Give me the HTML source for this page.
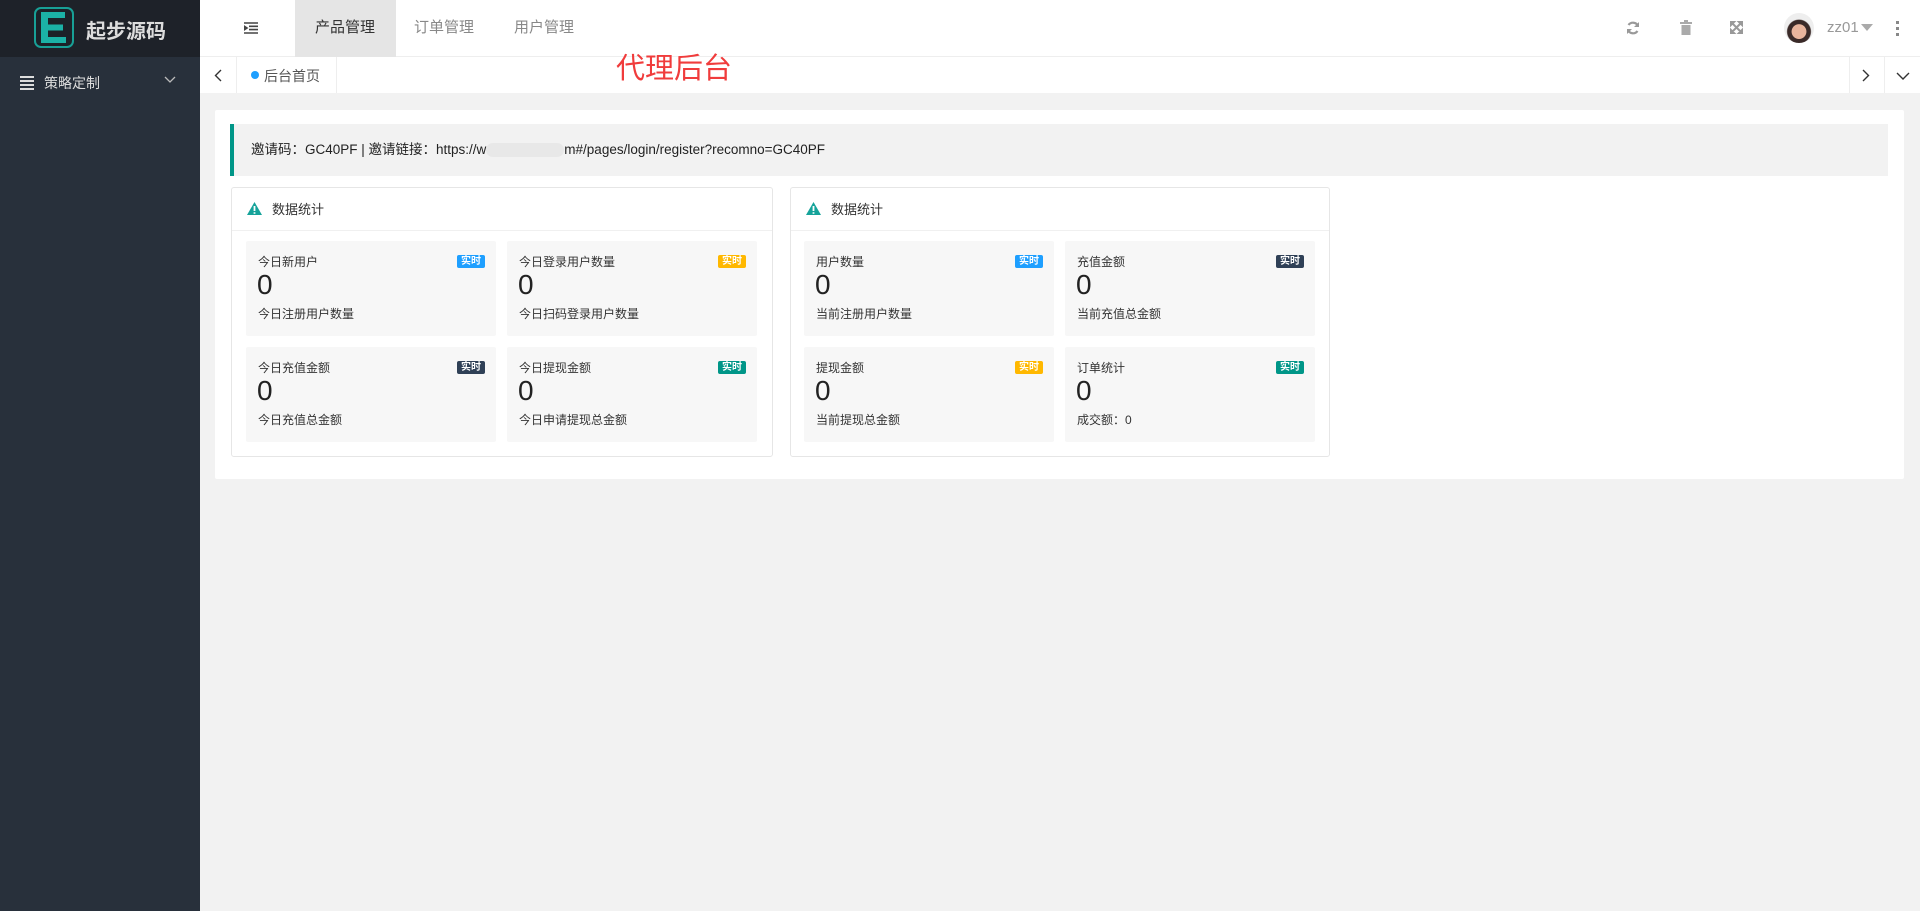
<!DOCTYPE html>
<html><head><meta charset="utf-8"><style>
*{box-sizing:border-box;margin:0;padding:0}
body{width:1920px;height:911px;overflow:hidden;background:#f2f2f2;font-family:"Liberation Sans","Noto Sans CJK SC",sans-serif;position:relative;color:#333}
.abs{position:absolute}
#side{left:0;top:0;width:200px;height:911px;background:#28303b}
#logo{left:0;top:0;width:200px;height:57px;background:#1e2229}
#hdr{left:200px;top:0;width:1720px;height:57px;background:#fff;border-bottom:1px solid #eee}
#tabs{left:200px;top:57px;width:1720px;height:36px;background:#fff}
.t{font-size:15px;color:#888;top:18px;line-height:20px}
.cell{position:absolute;background:#f7f7f7;border-radius:2px;width:250px;height:95px}
.cell .a{position:absolute;left:12px;top:12px;font-size:12px;color:#333}
.cell .b{position:absolute;left:11px;top:28px;font-size:28px;color:#222}
.cell .c{position:absolute;left:12px;top:64px;font-size:12px;color:#333}
.cell .bd{position:absolute;right:11px;top:14px;width:28px;height:13px;border-radius:2px;color:#fff;font-size:10px;font-weight:bold;text-align:center;line-height:13px}
.panel{position:absolute;top:187px;width:542px;height:270px;background:#fff;border:1px solid #e6e6e6;border-radius:3px}
.ph{height:43px;border-bottom:1px solid #f0f0f0;font-size:13px;line-height:43px;padding-left:40px;position:relative;color:#333}
.ph svg{position:absolute;left:15px;top:14px}
</style></head><body>
<div id="side" class="abs">
 <div class="abs" style="left:20px;top:76px;width:14px;height:12px">
  <div style="height:2px;background:#ddd;margin-bottom:2px"></div><div style="height:2px;background:#ddd;margin-bottom:2px"></div><div style="height:2px;background:#ddd;margin-bottom:2px"></div><div style="height:2px;background:#ddd"></div>
 </div>
 <div class="abs" style="left:44px;top:73px;font-size:14px;color:#ddd">策略定制</div>
 <svg class="abs" style="left:164px;top:76px" width="12" height="8"><path d="M1 1l5 5 5-5" stroke="#bbb" fill="none" stroke-width="1.3"/></svg>
</div>
<div id="logo" class="abs">
 <div class="abs" style="left:34px;top:7px;width:40px;height:41px;border:2px solid #18a096;border-radius:7px;background:#1c2228"></div>
 <svg class="abs" style="left:41px;top:12px" width="26" height="31"><path d="M0 0h24v6H7v6.5h15v6H7V25h18v6H0z" fill="#1bb2a6"/></svg>
 <div class="abs" style="left:86px;top:15px;font-size:20px;font-weight:bold;color:#ddd">起步源码</div>
</div>
<div id="hdr" class="abs">
 <svg class="abs" style="left:44px;top:22px" width="14" height="12"><path d="M0 1h14M5 4.3h9M5 7.6h9M0 11h14M0 4l3 2-3 2z" stroke="#444" stroke-width="1.6" fill="#444"/></svg>
 <div class="abs" style="left:95px;top:0;width:101px;height:57px;background:#e5e5e5"></div>
 <div class="abs t" style="left:115px;color:#333">产品管理</div>
 <div class="abs t" style="left:214px">订单管理</div>
 <div class="abs t" style="left:314px">用户管理</div>
 <svg class="abs" style="left:1426px;top:21px" width="14" height="14"><path d="M12 5A5.5 5.5 0 0 0 2.5 4M2 9a5.5 5.5 0 0 0 9.5 1" stroke="#999" stroke-width="2.2" fill="none"/><path d="M13 1v5h-5zM1 13V8h5z" fill="#999"/></svg>
 <svg class="abs" style="left:1480px;top:20px" width="12" height="15"><rect x="0" y="2" width="12" height="2" fill="#aaa"/><rect x="4" y="0" width="4" height="2" fill="#aaa"/><rect x="1.5" y="5" width="9" height="10" fill="#aaa"/></svg>
 <svg class="abs" style="left:1530px;top:21px" width="13" height="13"><path d="M0 0h5L0 5zM13 0v5L8 0zM0 13V8l5 5zM13 13H8l5-5zM2 2l9 9M11 2l-9 9" stroke="#999" stroke-width="2" fill="#999"/></svg>
 <div class="abs" style="left:1584px;top:13px;width:30px;height:30px;border-radius:50%;background:radial-gradient(circle at 50% 62%,#e8b49c 0 30%,#3a2a28 32% 48%,#eee 52%)"></div>
 <div class="abs" style="left:1627px;top:19px;font-size:15px;color:#999">zz01</div>
 <svg class="abs" style="left:1661px;top:24px" width="12" height="7"><path d="M0 0h12L6 7z" fill="#aaa"/></svg>
 <div class="abs" style="left:1696px;top:21px;width:3px;height:15px;background:repeating-linear-gradient(#888 0 3px,transparent 3px 6px)"></div>
</div>
<div id="tabs" class="abs">
 <svg class="abs" style="left:14px;top:12px" width="8" height="13"><path d="M7 1L1.5 6.5 7 12" stroke="#333" fill="none" stroke-width="1.4"/></svg>
 <div class="abs" style="left:36px;top:0;width:1px;height:36px;background:#eee"></div>
 <div class="abs" style="left:51px;top:14px;width:8px;height:8px;border-radius:50%;background:#1e9fff"></div>
 <div class="abs" style="left:64px;top:9px;font-size:14px;color:#555">后台首页</div>
 <div class="abs" style="left:136px;top:0;width:1px;height:36px;background:#eee"></div>
 <div class="abs" style="left:416px;top:-12px;font-size:29px;color:#f03c3c">代理后台</div>
 <div class="abs" style="left:1649px;top:0;width:1px;height:36px;background:#eee"></div>
 <div class="abs" style="left:1684px;top:0;width:1px;height:36px;background:#eee"></div>
 <svg class="abs" style="left:1662px;top:12px" width="8" height="13"><path d="M1 1l5.5 5.5L1 12" stroke="#333" fill="none" stroke-width="1.4"/></svg>
 <svg class="abs" style="left:1696px;top:15px" width="14" height="8"><path d="M1 1l6 6 6-6" stroke="#333" fill="none" stroke-width="1.4"/></svg>
</div>
<div class="abs" style="left:215px;top:110px;width:1689px;height:369px;background:#fff;border-radius:2px"></div>
<div class="abs" style="left:230px;top:124px;width:1658px;height:52px;background:#f2f2f2;border-left:4px solid #009688;font-size:13.5px;line-height:52px;padding-left:17px;color:#222">邀请码：GC40PF | 邀请链接：https://w<span style="display:inline-block;width:78px;height:14px;background:#e8e8e8;vertical-align:middle;border-radius:7px"></span>m#/pages/login/register?recomno=GC40PF</div>

<div class="panel" style="left:231px">
 <div class="ph"><svg width="15" height="13"><path d="M7.5 0L15 13H0z" fill="#16a39a"/><path d="M7.5 4v5M7.5 10.3v1.5" stroke="#fff" stroke-width="1.8"/></svg>数据统计</div>
 <div class="cell" style="left:14px;top:53px"><div class="a">今日新用户</div><div class="b">0</div><div class="c">今日注册用户数量</div><div class="bd" style="background:#1e9fff">实时</div></div>
 <div class="cell" style="left:275px;top:53px"><div class="a">今日登录用户数量</div><div class="b">0</div><div class="c">今日扫码登录用户数量</div><div class="bd" style="background:#ffb800">实时</div></div>
 <div class="cell" style="left:14px;top:159px"><div class="a">今日充值金额</div><div class="b">0</div><div class="c">今日充值总金额</div><div class="bd" style="background:#2f4056">实时</div></div>
 <div class="cell" style="left:275px;top:159px"><div class="a">今日提现金额</div><div class="b">0</div><div class="c">今日申请提现总金额</div><div class="bd" style="background:#009688">实时</div></div>
</div>
<div class="panel" style="left:790px;width:540px">
 <div class="ph"><svg width="15" height="13"><path d="M7.5 0L15 13H0z" fill="#16a39a"/><path d="M7.5 4v5M7.5 10.3v1.5" stroke="#fff" stroke-width="1.8"/></svg>数据统计</div>
 <div class="cell" style="left:13px;top:53px"><div class="a">用户数量</div><div class="b">0</div><div class="c">当前注册用户数量</div><div class="bd" style="background:#1e9fff">实时</div></div>
 <div class="cell" style="left:274px;top:53px"><div class="a">充值金额</div><div class="b">0</div><div class="c">当前充值总金额</div><div class="bd" style="background:#2f4056">实时</div></div>
 <div class="cell" style="left:13px;top:159px"><div class="a">提现金额</div><div class="b">0</div><div class="c">当前提现总金额</div><div class="bd" style="background:#ffb800">实时</div></div>
 <div class="cell" style="left:274px;top:159px"><div class="a">订单统计</div><div class="b">0</div><div class="c">成交额：0</div><div class="bd" style="background:#009688">实时</div></div>
</div>
</body></html>
